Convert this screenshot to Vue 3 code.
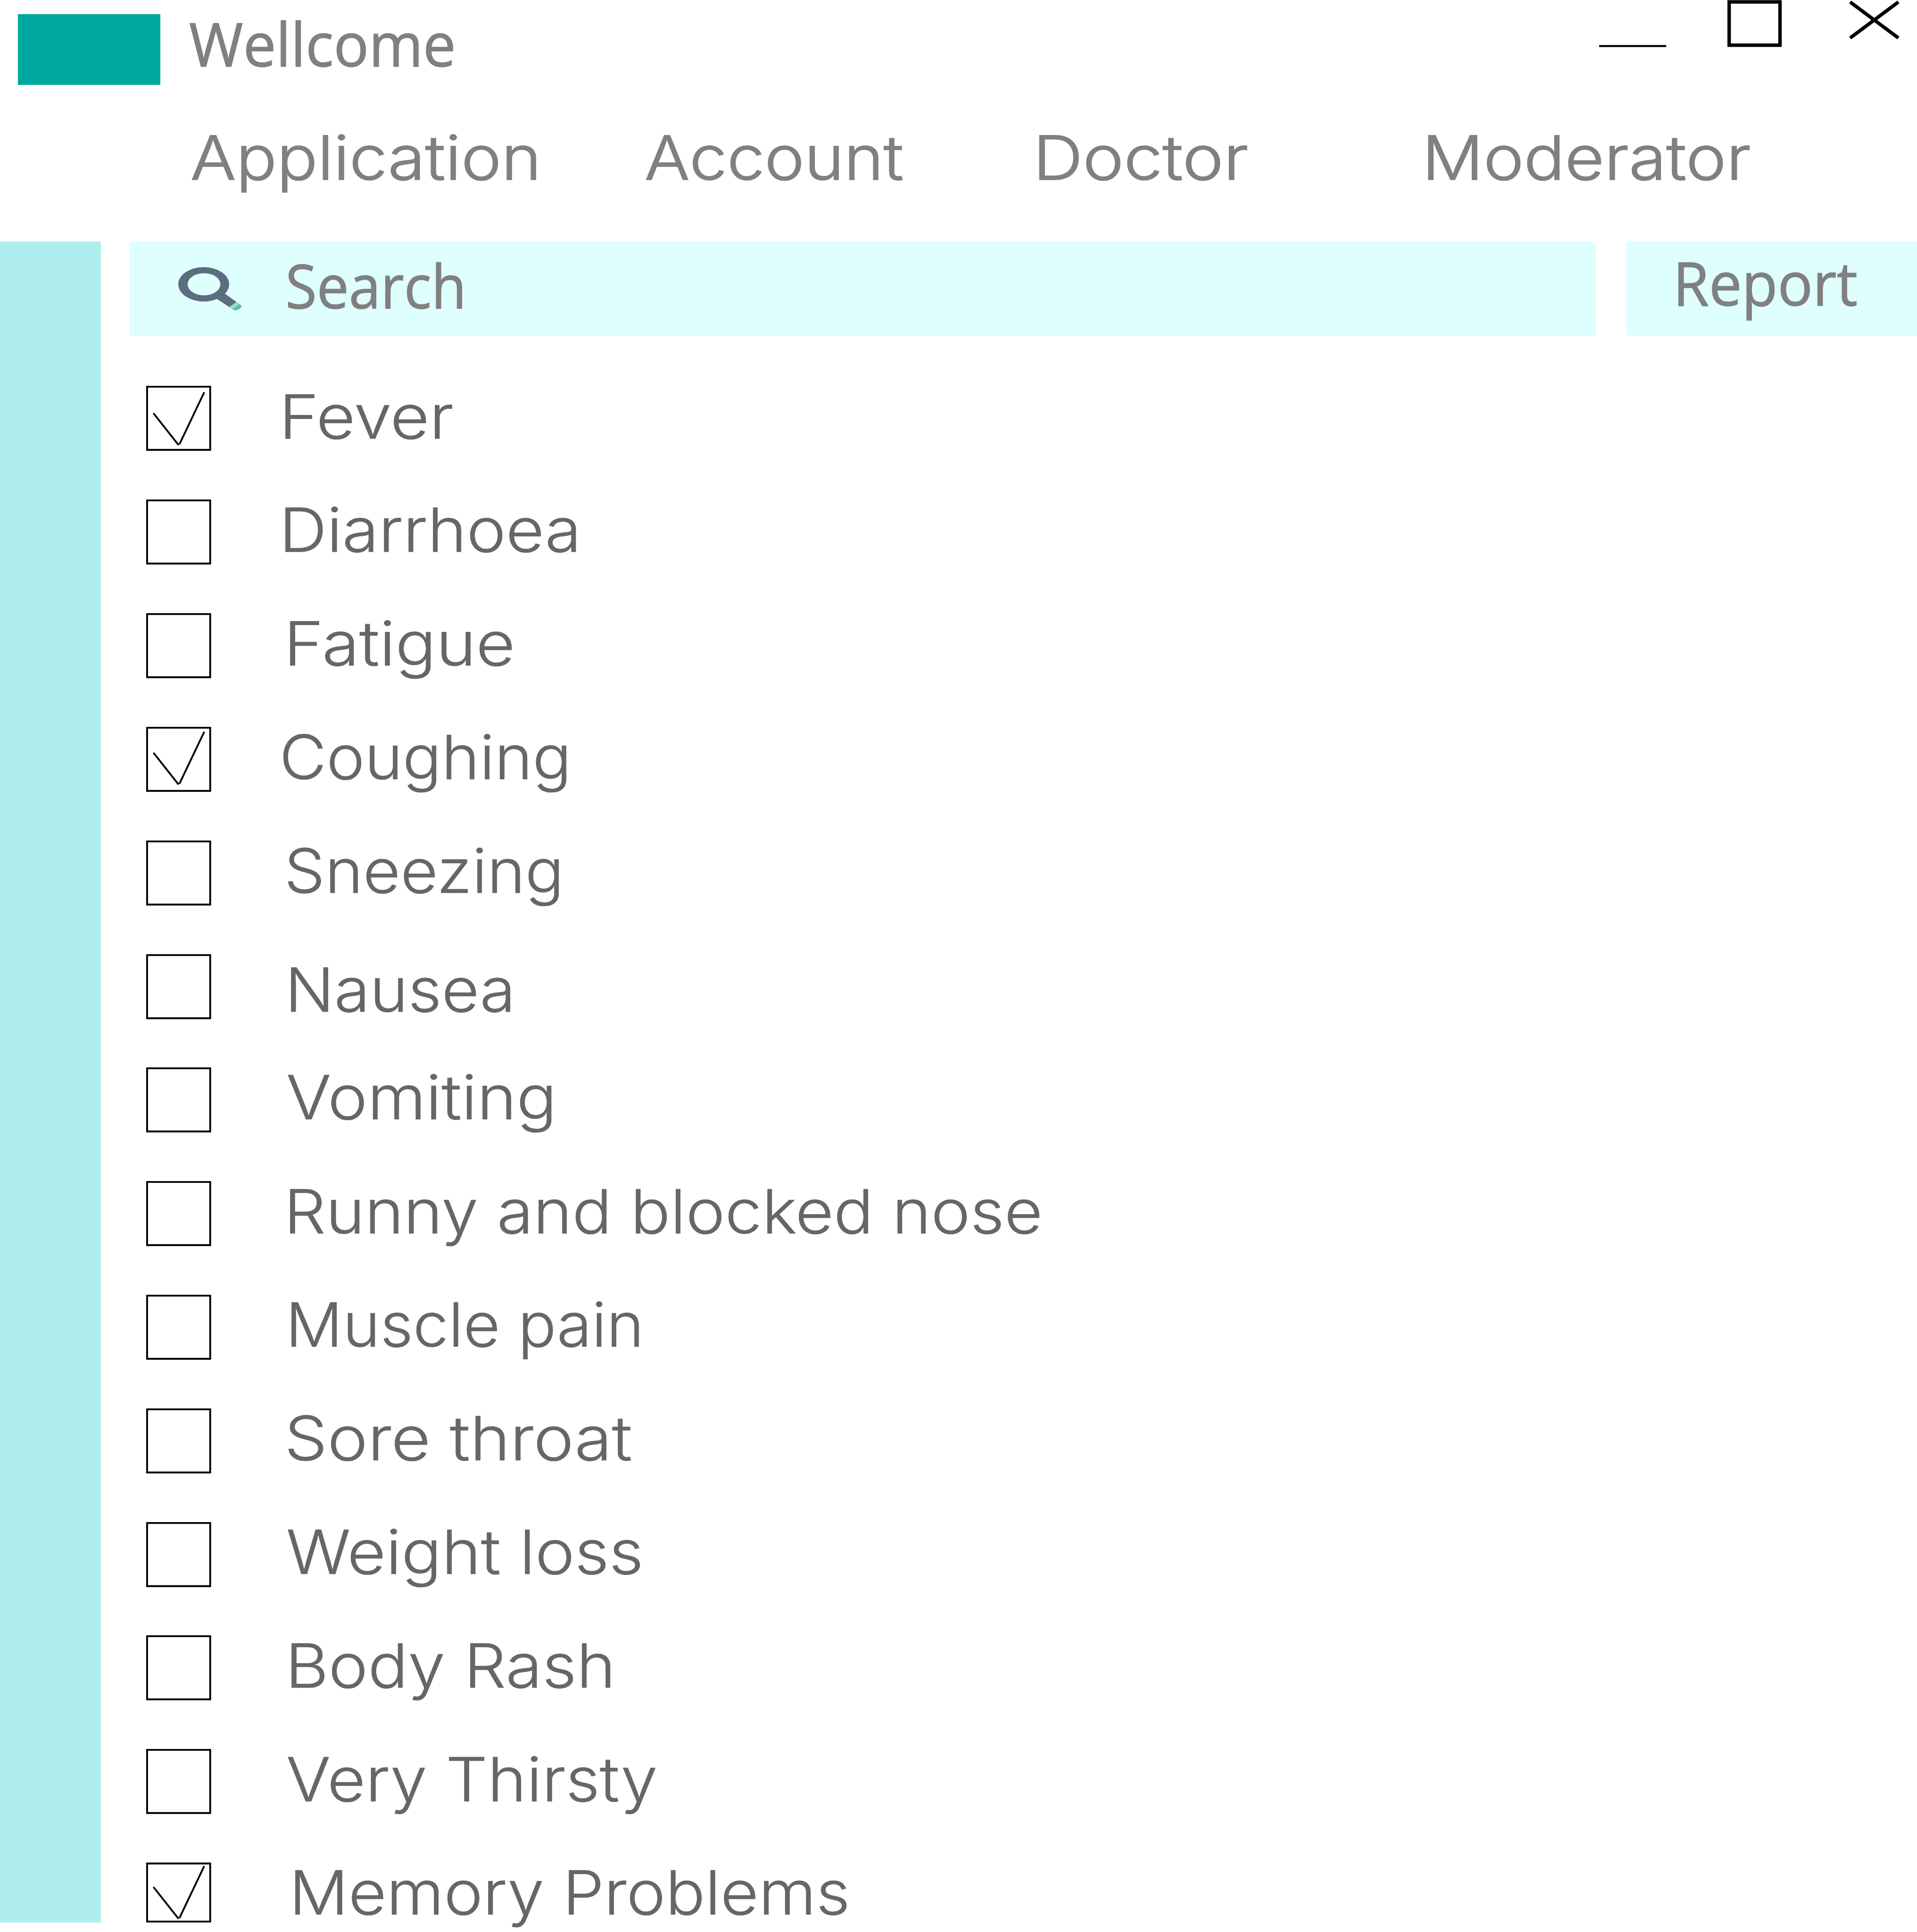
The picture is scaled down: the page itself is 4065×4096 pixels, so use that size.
<script setup>
const menu = [
  { label: 'Application', gap: 443, width: 795 },
  { label: 'Account', gap: 255, width: 592 },
  { label: 'Doctor', gap: 317, width: 480 },
  { label: 'Moderator', gap: 419, width: 742 },
]

const symptoms = [
  { label: 'Fever', checked: true, indent: 172, width: 386, drop: 1.5, lift: 0 },
  { label: 'Diarrhoea', indent: 172, width: 672, drop: 1 },
  { label: 'Fatigue', indent: 183, width: 513, drop: 1 },
  { label: 'Coughing', checked: true, indent: 167, width: 654, drop: 1, lift: -3.5 },
  { label: 'Sneezing', indent: 178, width: 626, drop: 1 },
  { label: 'Nausea', indent: 185, width: 507, drop: 13.5 },
  { label: 'Vomiting', indent: 177, width: 610, drop: 0 },
  { label: 'Runny and blocked nose', indent: 183, width: 1732, drop: 0.5 },
  { label: 'Muscle pain', indent: 186, width: 803, drop: 0.5 },
  { label: 'Sore throat', indent: 179, width: 792, drop: 0.5 },
  { label: 'Weight loss', indent: 177, width: 814, drop: 0.5 },
  { label: 'Body Rash', indent: 186, width: 737, drop: 1 },
  { label: 'Very Thirsty', indent: 177, width: 850, drop: 0.5 },
  { label: 'Memory Problems', checked: true, indent: 195, width: 1274, drop: 0.5, lift: -7 },
]

const u = (n) => `calc(${n} * var(--u))`

// Stretches a label so that its inked width equals the given number of units.
const vFit = {
  mounted(el, { value }) {
    const style = getComputedStyle(el)
    const ctx = document.createElement('canvas').getContext('2d')
    ctx.font = `${style.fontWeight} ${style.fontSize} ${style.fontFamily}`
    const m = ctx.measureText(el.textContent.trim())
    const target = (value * window.innerWidth) / 4430
    const scale = target / (m.actualBoundingBoxLeft + m.actualBoundingBoxRight)
    el.style.transform = `translateX(${m.actualBoundingBoxLeft * scale}px) scaleX(${scale})`
  },
}
</script>

<template>
  <div class="window">
    <header class="titlebar">
      <div class="logo"></div>
      <h1 class="title"><span v-fit="609" class="fit">Wellcome</span></h1>
      <div class="controls">
        <svg class="minimise" viewBox="0 0 155 109"><path d="M0 106.4H155" stroke-width="4.6" /></svg>
        <svg class="maximise" viewBox="0 0 126 109"><rect x="4" y="4.4" width="117.5" height="100" stroke-width="8" /></svg>
        <svg class="close" viewBox="0 0 118 92"><path d="M3.5 4.6L115 87.8M115 4.6L3.5 87.8" stroke-width="8" /></svg>
      </div>
    </header>

    <nav class="menu">
      <a
        v-for="item in menu"
        :key="item.label"
        class="menu-item"
        :style="{ marginLeft: u(item.gap), width: u(item.width) }"
      ><span v-fit="item.width" class="fit">{{ item.label }}</span></a>
    </nav>

    <div class="body">
      <aside class="sidebar"></aside>
      <main class="content">
        <div class="toolbar">
          <div class="search">
            <svg class="magnifier" viewBox="0 0 148 102">
              <path d="M89 73.5L107.5 61.5L134.8 80.8L118 92.7Z" fill="#5b6d7f" />
              <path
                fill="#5b6d7f"
                fill-rule="evenodd"
                d="M0 40a58.8 39.8 0 1 0 117.6 0a58.8 39.8 0 1 0 -117.6 0ZM21.6 40a37.9 25.6 0 1 0 75.8 0a37.9 25.6 0 1 0 -75.8 0Z"
              />
              <path d="M134.8 80.8L141.8 85.6L124.6 97.4L117.6 92.6Z" fill="#98d7cb" />
              <path d="M141.8 85.6C148 89.6 147.2 93 142 96.6C136.6 100.6 129 101.4 124.6 97.4Z" fill="#5cbfac" />
            </svg>
            <span class="search-label"><span v-fit="402" class="fit">Search</span></span>
          </div>
          <div class="report"><span class="report-label"><span v-fit="411" class="fit">Report</span></span></div>
        </div>

        <ul class="symptoms">
          <li v-for="s in symptoms" :key="s.label" class="row">
            <svg class="box" viewBox="0 0 150 150" preserveAspectRatio="none">
              <rect x="2.1" y="2.1" width="145.8" height="145.8" vector-effect="non-scaling-stroke" />
            </svg>
            <svg
              v-if="s.checked"
              class="tick"
              viewBox="0 0 150 150"
              :style="{ transform: `translateY(${u(s.lift)})` }"
            ><path d="M16.8 63.3L74.8 136.7M76.8 135L134.2 14.7" /></svg>
            <span
              class="label"
              :style="{ marginLeft: u(s.indent), marginTop: u(s.drop), width: u(s.width) }"
            ><span v-fit="s.width" class="fit">{{ s.label }}</span></span>
          </li>
        </ul>
      </main>
    </div>
  </div>
</template>

<style>
body {
  margin: 0;
  background: #fff;
  overflow: hidden;
}
</style>

<style scoped>
.window {
  --u: calc(100vw / 4430);
  width: calc(4430 * var(--u));
  height: calc(4464 * var(--u));
  overflow: hidden;
  background: #fff;
  display: flex;
  flex-direction: column;
}
svg {
  display: block;
  flex: none;
  overflow: visible;
}
.fit {
  display: inline-block;
  white-space: nowrap;
  transform-origin: 0 50%;
}
.titlebar {
  height: calc(280 * var(--u));
  flex: none;
  display: flex;
  align-items: flex-start;
}
.logo {
  width: calc(330 * var(--u));
  height: calc(163 * var(--u));
  margin: calc(33 * var(--u)) 0 0 calc(41 * var(--u));
  background: #00a99d;
}
.title,
.search-label,
.report-label {
  display: block;
  margin: 0;
  font-family: "Open Sans", "Noto Sans", sans-serif;
  font-weight: 400;
  font-size: calc(140 * var(--u));
  line-height: calc(160 * var(--u));
  color: #808080;
  -webkit-text-stroke: calc(1.6 * var(--u)) #808080;
}
.title {
  width: calc(610 * var(--u));
  margin: calc(20.5 * var(--u)) 0 0 calc(67.5 * var(--u));
}
.controls {
  display: flex;
  align-items: flex-start;
  margin-left: auto;
  margin-right: calc(40 * var(--u));
}
.controls svg {
  fill: none;
  stroke: #000;
}
.minimise {
  width: calc(155 * var(--u));
  height: calc(109 * var(--u));
}
.maximise {
  width: calc(126 * var(--u));
  height: calc(109 * var(--u));
  margin-left: calc(142 * var(--u));
}
.close {
  width: calc(118 * var(--u));
  height: calc(92 * var(--u));
  margin-left: calc(154 * var(--u));
}
.menu {
  height: calc(278.5 * var(--u));
  flex: none;
  display: flex;
  align-items: flex-start;
}
.menu-item {
  flex: none;
  margin-top: calc(4.5 * var(--u));
  font-family: Inter, "Open Sans", sans-serif;
  font-weight: 300;
  font-size: calc(141 * var(--u));
  line-height: calc(160 * var(--u));
  color: #808080;
  -webkit-text-stroke: calc(1.8 * var(--u)) #808080;
}
.body {
  flex: 1;
  min-height: 0;
  display: flex;
  align-items: flex-start;
}
.sidebar {
  flex: none;
  width: calc(233.4 * var(--u));
  height: calc(3883.5 * var(--u));
  background: #afeeee;
}
.content {
  flex: 1;
  margin-left: calc(66.6 * var(--u));
}
.toolbar {
  display: flex;
  justify-content: space-between;
  height: calc(217 * var(--u));
}
.search,
.report {
  display: flex;
  align-items: flex-start;
  background: #dfffff;
}
.search {
  width: calc(3387.5 * var(--u));
}
.report {
  width: calc(672 * var(--u));
}
.magnifier {
  width: calc(148 * var(--u));
  height: calc(102 * var(--u));
  margin: calc(58 * var(--u)) 0 0 calc(112.3 * var(--u));
}
.search-label {
  width: calc(404 * var(--u));
  margin: calc(21 * var(--u)) 0 0 calc(105.7 * var(--u));
}
.report-label {
  width: calc(412 * var(--u));
  margin: calc(14.5 * var(--u)) 0 0 calc(120.8 * var(--u));
}
.symptoms {
  list-style: none;
  margin: calc(116.5 * var(--u)) 0 0 calc(37.5 * var(--u));
  padding: 0;
}
.row {
  position: relative;
  display: flex;
  align-items: flex-start;
  height: calc(262.45 * var(--u));
}
.box,
.tick {
  width: calc(150 * var(--u));
  height: calc(150 * var(--u));
  fill: none;
  stroke: #000;
  stroke-width: 4.2;
}
.box {
  stroke-width: calc(4.2 * var(--u));
}
.tick {
  position: absolute;
  left: 0;
  top: 0;
}
.row:last-child .box {
  height: calc(138 * var(--u));
}
.label {
  flex: none;
  font-family: Inter, "Open Sans", sans-serif;
  font-weight: 300;
  font-size: calc(141.3 * var(--u));
  line-height: calc(137 * var(--u));
  color: #666;
  -webkit-text-stroke: calc(0.7 * var(--u)) #666;
}
</style>
